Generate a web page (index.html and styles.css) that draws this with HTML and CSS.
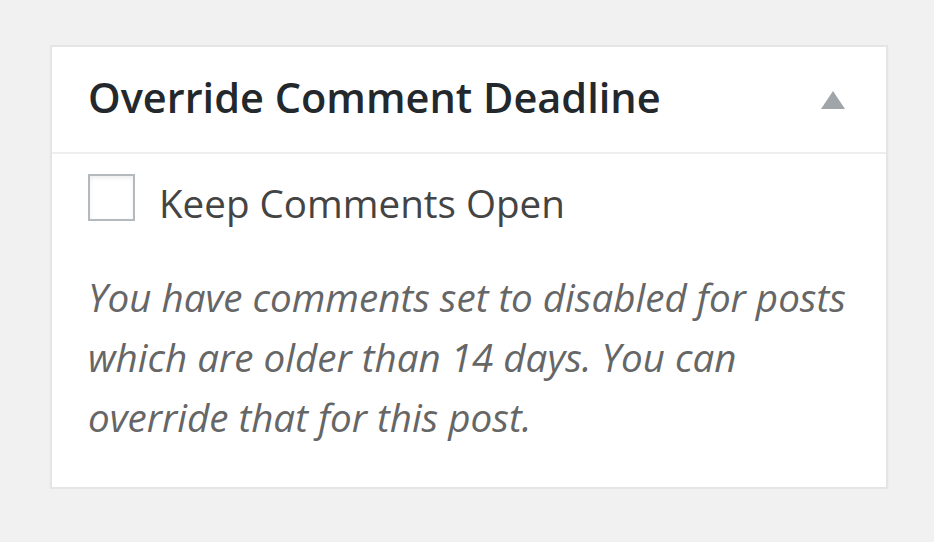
FILE: index.html
```html
<!DOCTYPE html>
<html>
<head>
<meta charset="utf-8">
<link rel="stylesheet" href="styles.css">
</head>
<body>
<div class="postbox">
  <div class="postbox-header">
    <h2 class="postbox-title">Override Comment Deadline</h2>
    <span class="toggle-arrow" aria-hidden="true"></span>
  </div>
  <div class="postbox-inside">
    <label class="check-row">
      <span class="checkbox"></span>
      <span class="check-label">Keep Comments Open</span>
    </label>
    <p class="description">You have comments set to disabled for posts which are older than 14 days. You can override that for this post.</p>
  </div>
</div>
</body>
</html>
```

FILE: styles.css
```css
html, body {
  margin: 0;
  padding: 0;
  background: #f1f1f1;
}
body {
  padding: 45px 0 0 50px;
  font-family: "Open Sans", "Liberation Sans", sans-serif;
}
.postbox {
  box-sizing: border-box;
  width: 838px;
  background: #fff;
  border: 2px solid #e5e5e5;
  box-shadow: 0 2px 2px rgba(0, 0, 0, 0.04);
}
.postbox-header {
  box-sizing: border-box;
  height: 107px;
  border-bottom: 2px solid #eeeeee;
  display: flex;
  align-items: center;
  justify-content: space-between;
  padding: 0 41px 3px 36px;
}
.postbox-title {
  margin: 0;
  font-size: 41.5px;
  font-weight: 600;
  color: #23282d;
  line-height: 1;
}
.toggle-arrow {
  width: 0;
  height: 0;
  margin-top: 3px;
  border-left: 12px solid transparent;
  border-right: 12px solid transparent;
  border-bottom: 18px solid #a0a5aa;
}
.postbox-inside {
  padding: 20px 36px 40px 36px;
}
.check-row {
  display: flex;
  align-items: flex-start;
  gap: 24px;
}
.checkbox {
  box-sizing: border-box;
  flex: none;
  width: 47px;
  height: 47px;
  border: 2px solid #b4b9be;
  background: #fff;
  box-shadow: inset 0 2px 4px rgba(0, 0, 0, 0.07);
}
.check-label {
  font-size: 38.6px;
  color: #444;
  line-height: 47px;
  padding-top: 6px;
}
.description {
  margin: 40px 0 0 0;
  font-size: 38.6px;
  line-height: 60px;
  font-style: italic;
  color: #666;
}
```
